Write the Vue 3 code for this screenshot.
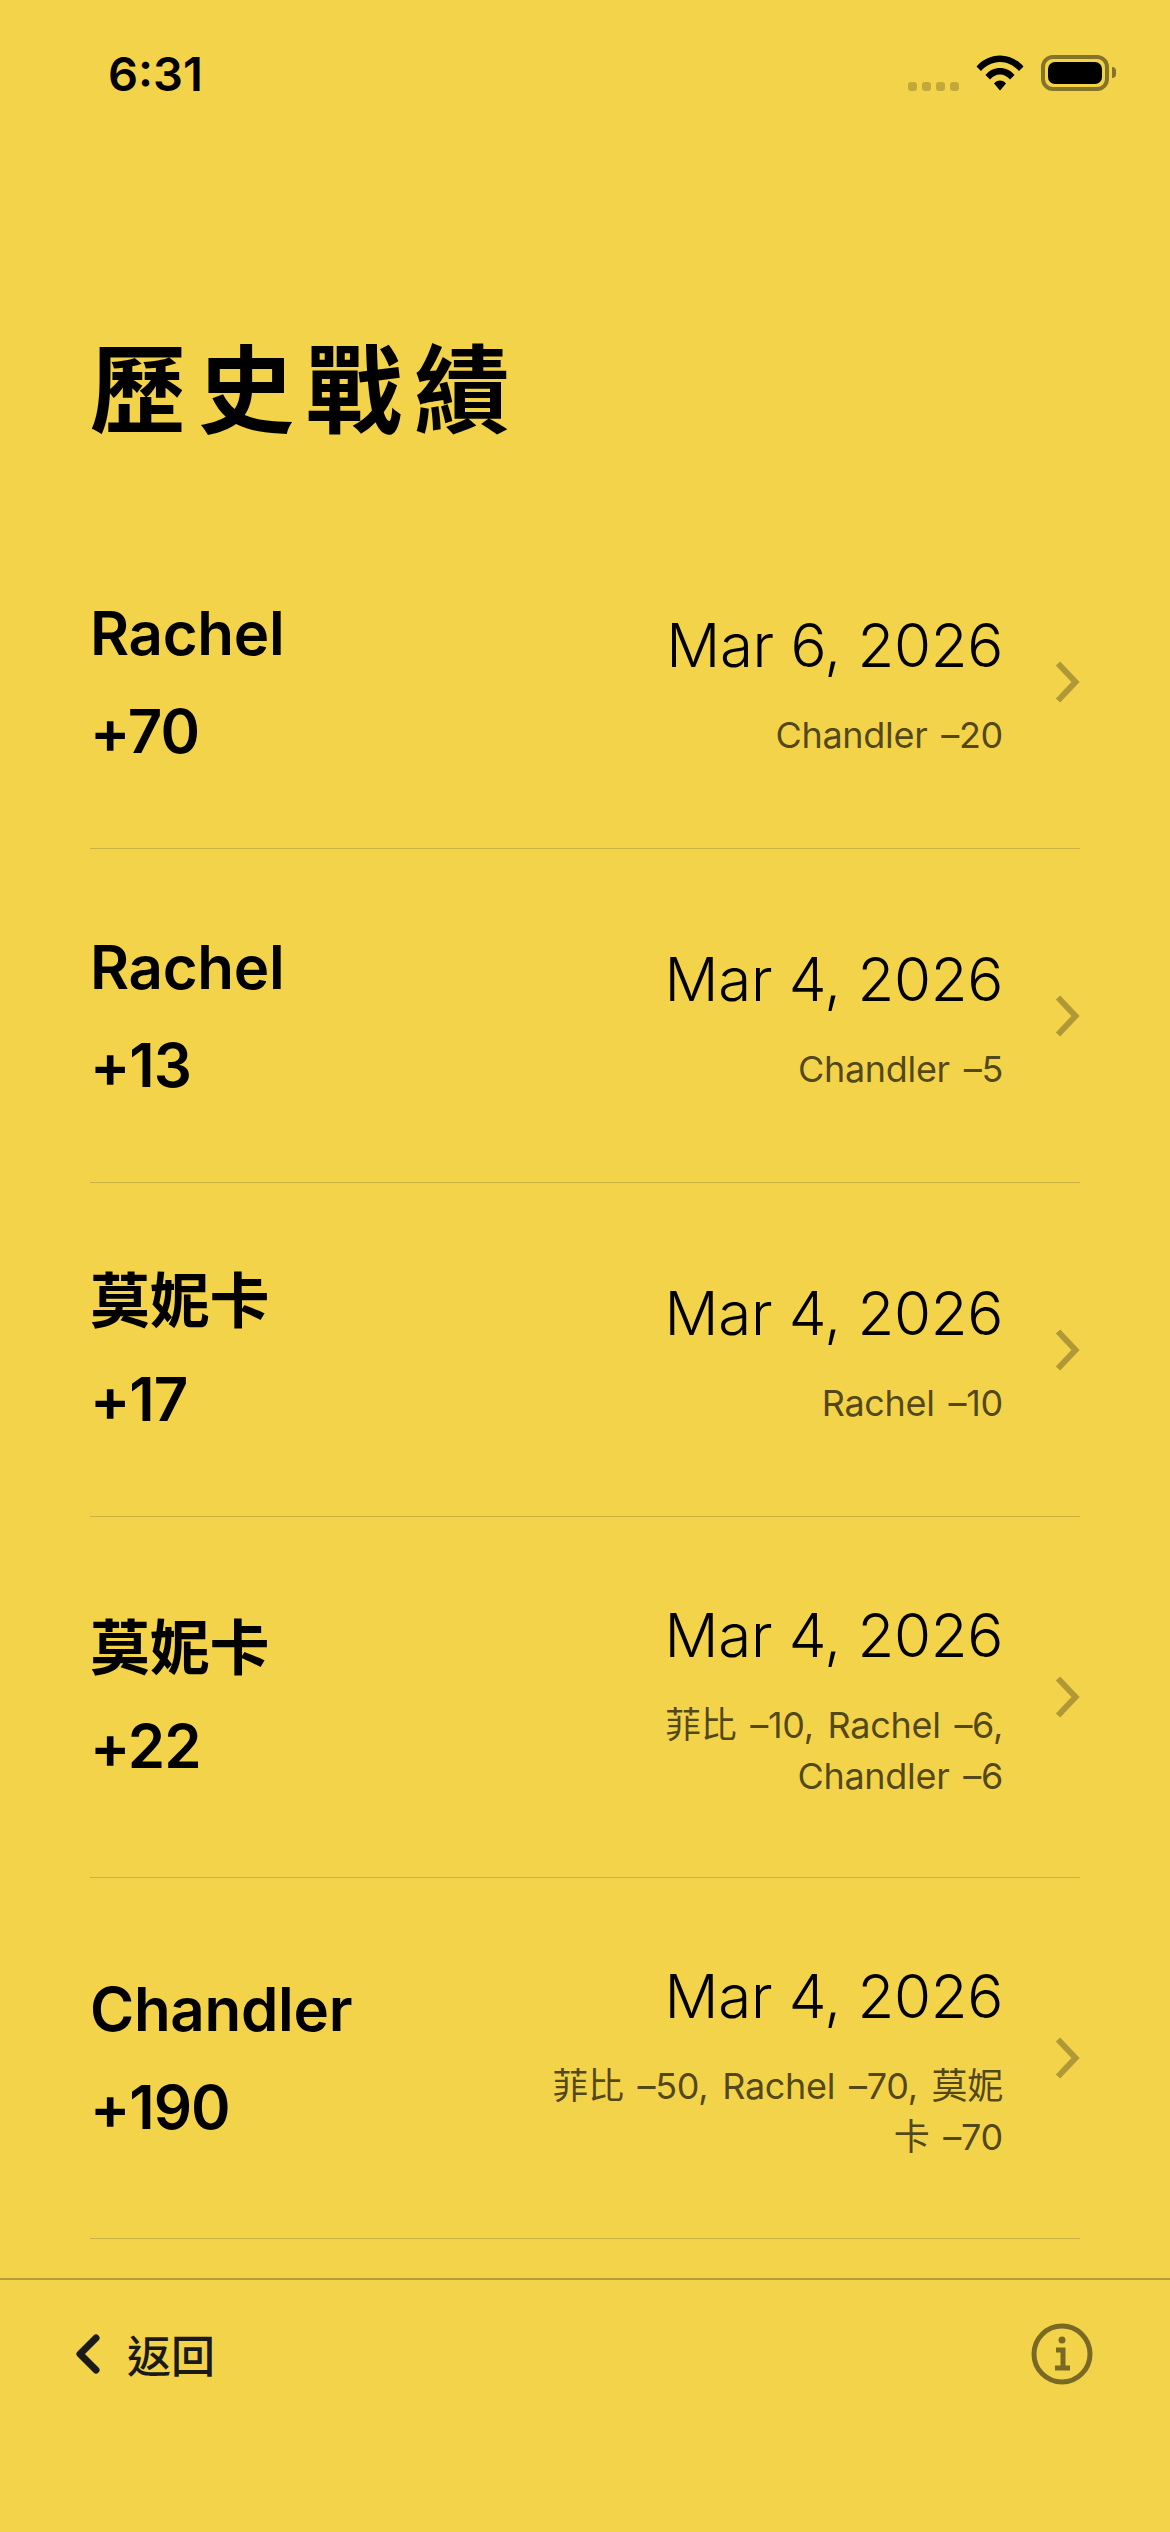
<template>
  <div class="screen">
    <div class="status-bar">
      <span class="time">6:31</span>
      <div class="status-icons">
        <div class="signal">
          <i v-for="n in 4" :key="n"></i>
        </div>
        <svg class="wifi" width="48" height="36" viewBox="0 0 48 36">
          <path d="M0.5 11.5C6.500 4.500 15 0.500 24 0.500C33 0.500 41.500 4.500 47.500 11.500L43 16C38 10.500 31.500 7 24 7C16.500 7 10 10.500 5 16Z" />
          <path d="M9.500 20C13 15.500 18.500 13 24 13C29.500 13 35 15.500 38.500 20L34 24.500C31.500 21.500 28 19.500 24 19.500C20 19.500 16.500 21.500 14 24.500Z" />
          <path d="M18 28.500C19.500 26.500 21.500 25.500 24 25.500C26.500 25.500 28.500 26.500 30 28.500L24 35.500Z" />
        </svg>
        <div class="battery">
          <div class="battery-fill"></div>
        </div>
        <div class="battery-nub"></div>
      </div>
    </div>

    <h1 class="title">歷史戰績</h1>

    <div class="list">
      <div v-for="game in games" :key="game.id" class="row">
        <div class="winner">
          <p class="winner-name">{{ game.winner }}</p>
          <p class="winner-score">{{ game.score }}</p>
        </div>
        <div class="detail">
          <p class="date">{{ game.date }}</p>
          <p class="losers">{{ game.losers }}</p>
        </div>
        <svg class="chevron" width="26" height="44" viewBox="0 0 26 44">
          <path d="M4 3.500L21.500 22L4 40.500" />
        </svg>
      </div>
    </div>

    <div class="toolbar">
      <div class="back">
        <svg class="back-icon" width="26" height="40" viewBox="0 0 26 40">
          <path d="M21 4L5 20L21 36" />
        </svg>
        <span class="back-text">返回</span>
      </div>
      <svg class="info" width="62" height="62" viewBox="0 0 62 62">
        <circle cx="31" cy="31" r="28" />
        <circle class="info-dot" cx="31" cy="17" r="3.500" />
        <path d="M25 27H32V45M24 45H39" />
      </svg>
    </div>
  </div>
</template>

<script setup>
const games = [
  { id: 1, winner: 'Rachel', score: '+70', date: 'Mar 6, 2026', losers: 'Chandler –20' },
  { id: 2, winner: 'Rachel', score: '+13', date: 'Mar 4, 2026', losers: 'Chandler –5' },
  { id: 3, winner: '莫妮卡', score: '+17', date: 'Mar 4, 2026', losers: 'Rachel –10' },
  { id: 4, winner: '莫妮卡', score: '+22', date: 'Mar 4, 2026', losers: '菲比 –10, Rachel –6, Chandler –6' },
  { id: 5, winner: 'Chandler', score: '+190', date: 'Mar 4, 2026', losers: '菲比 –50, Rachel –70, 莫妮卡 –70' },
];
</script>

<style scoped>
.screen {
  width: 1170px;
  height: 2532px;
  display: flex;
  flex-direction: column;
  overflow: hidden;
  background: #f3d34a;
  font-family: Inter, "Noto Sans CJK TC", sans-serif;
  color: #000;
}

.status-bar {
  height: 110px;
  flex: none;
  display: flex;
  justify-content: space-between;
  padding: 44px 54px 0 108px;
  box-sizing: border-box;
}

.time {
  font-size: 47px;
  line-height: 60px;
  font-weight: 600;
}

.status-icons {
  display: flex;
  align-items: flex-start;
  padding-top: 11px;
}

.signal {
  display: flex;
  gap: 5px;
  margin: 27px 17px 0 0;
}

.signal i {
  width: 9px;
  height: 9px;
  border-radius: 3px;
  background: rgba(0, 0, 0, 0.2);
}

.wifi {
  fill: #000;
  margin-right: 17px;
}

.battery {
  width: 68px;
  height: 36px;
  box-sizing: border-box;
  border: 4px solid rgba(0, 0, 0, 0.45);
  border-radius: 12px;
  padding: 3px;
}

.battery-fill {
  height: 100%;
  background: #000;
  border-radius: 7px;
}

.battery-nub {
  width: 4px;
  height: 11px;
  margin: 12px 0 0 3px;
  border-radius: 0 4px 4px 0;
  background: rgba(0, 0, 0, 0.45);
}

.title {
  margin: 220px 0 0;
  padding-left: 90px;
  flex: none;
  height: 185px;
  font-size: 96px;
  line-height: 120px;
  font-weight: 700;
  letter-spacing: 12px;
}

.list {
  flex: 1;
  min-height: 0;
  margin: 0 90px;
}

.row {
  display: flex;
  align-items: center;
  padding: 68.5px 0;
  border-bottom: 1px solid rgba(0, 0, 0, 0.16);
}

.winner {
  flex: 1;
}

.winner-name,
.winner-score {
  margin: 0;
  font-size: 60px;
  line-height: 98px;
  font-weight: 600;
  letter-spacing: -0.3px;
}

.winner-score {
  letter-spacing: -1px;
}

.detail {
  width: 460px;
  padding-bottom: 6.5px;
  text-align: right;
  flex: none;
}

.date {
  margin: 0;
  font-size: 60px;
  line-height: 98px;
  font-weight: 300;
  letter-spacing: -0.3px;
}

.losers {
  margin: 16.5px 0 0;
  font-size: 36px;
  line-height: 51px;
  letter-spacing: -0.3px;
  word-spacing: 4px;
  color: rgba(0, 0, 0, 0.68);
}

.chevron {
  flex: none;
  margin-left: 51px;
  fill: none;
  stroke: rgba(0, 0, 0, 0.28);
  stroke-width: 6;
}

.toolbar {
  height: 254px;
  flex: none;
  box-sizing: border-box;
  display: flex;
  justify-content: space-between;
  align-items: flex-start;
  padding: 43px 77px 0 75px;
  border-top: 2px solid rgba(0, 0, 0, 0.25);
}

.back {
  display: flex;
  align-items: center;
  height: 62px;
}

.back-icon {
  fill: none;
  stroke: #1a1a1a;
  stroke-width: 7;
  stroke-linecap: round;
  stroke-linejoin: round;
}

.back-text {
  margin-left: 26px;
  font-size: 44px;
  font-weight: 500;
  color: #1a1a1a;
}

.info {
  fill: none;
  stroke: rgba(0, 0, 0, 0.5);
  stroke-width: 5;
}

.info-dot {
  fill: rgba(0, 0, 0, 0.5);
  stroke: none;
}
</style>
